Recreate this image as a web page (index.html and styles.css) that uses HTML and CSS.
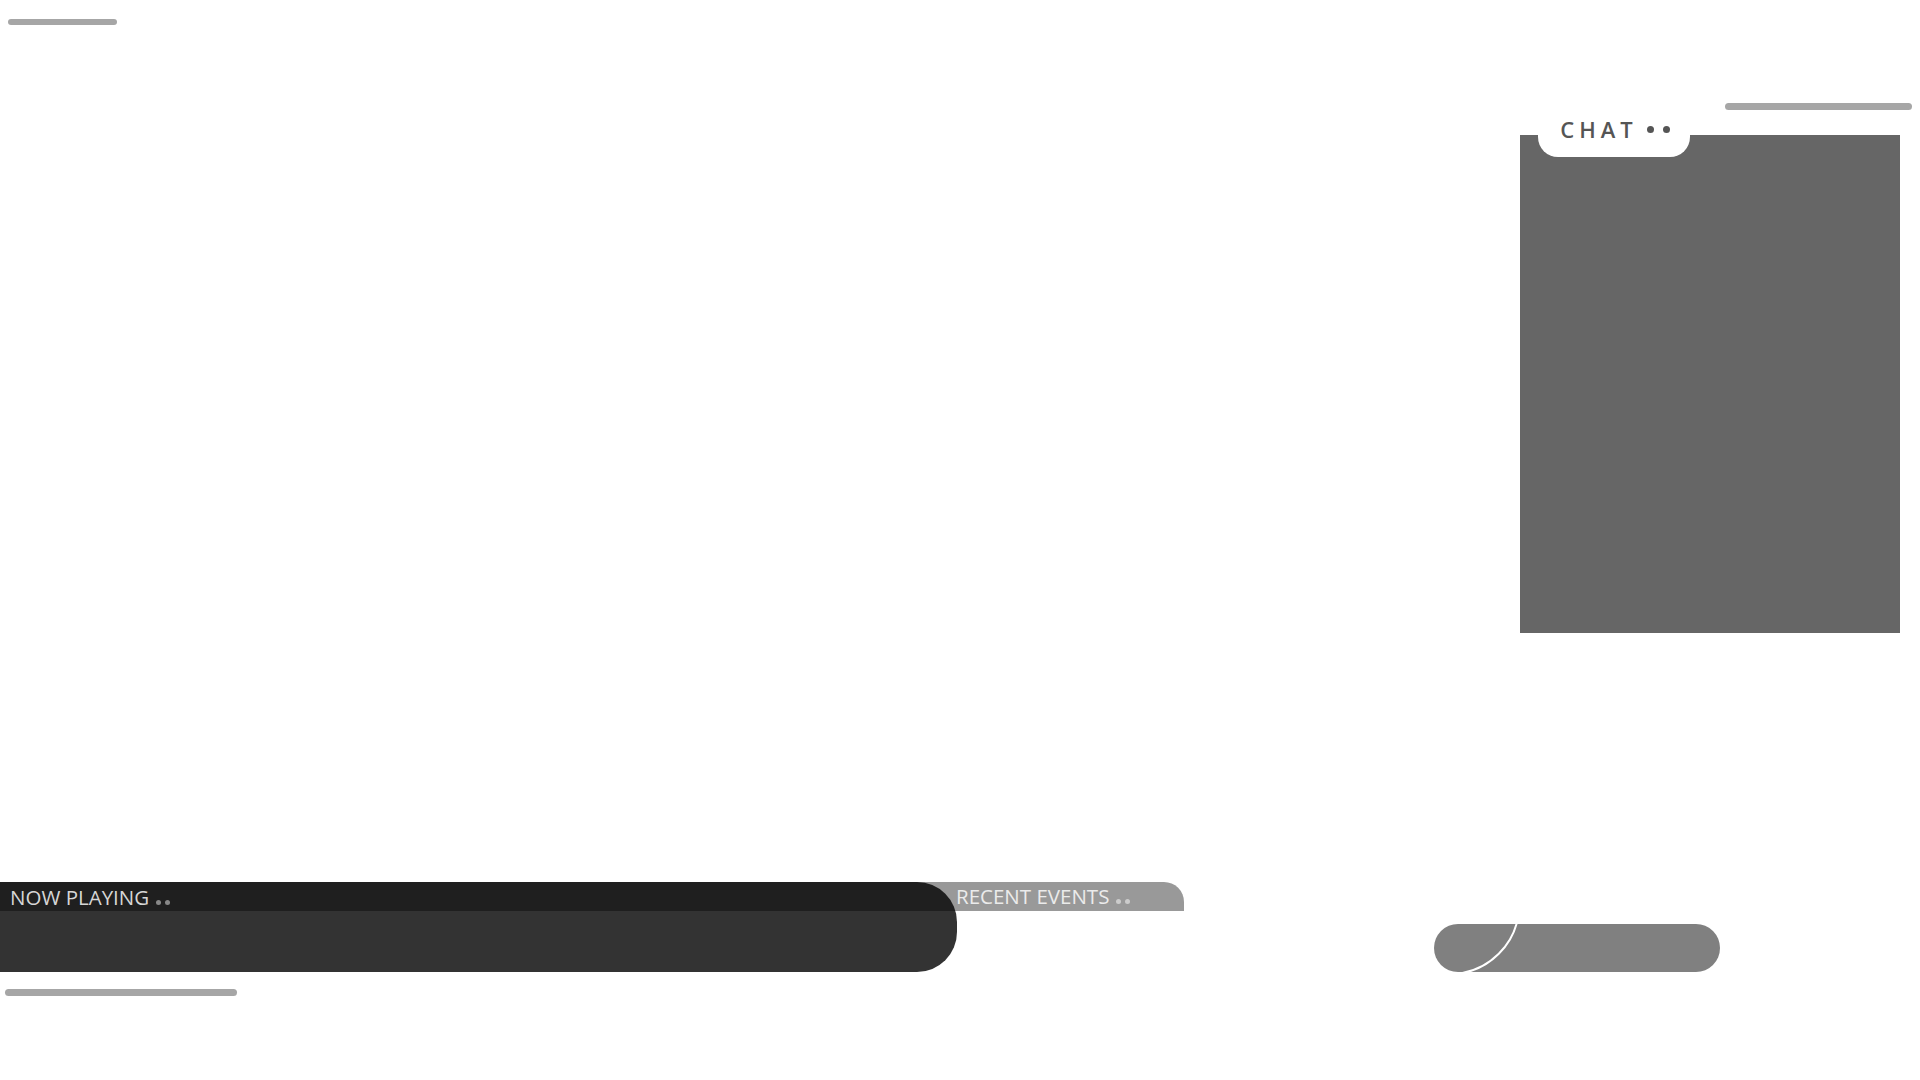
FILE: index.html
```html
<!DOCTYPE html>
<html lang="en">
<head>
  <meta charset="UTF-8"/>
  <meta name="viewport" content="width=device-width, initial-scale=1.0"/>
  <title>Stream Overlay</title>
  <link rel="stylesheet" href="styles.css">
</head>
<body>
<div class="overlay">
  <div class="bar bar-top"></div>

  <section class="chat">
    <div class="bar chat-bar"></div>
    <div class="chat-panel">
      <div class="chat-tab">
        <span class="chat-title">CHAT</span>
        <span class="dot dot-dark"></span>
        <span class="dot dot-dark"></span>
      </div>
    </div>
  </section>

  <footer class="bottom">
    <div class="now">
      <div class="now-head">
        NOW PLAYING<span class="mini-dots"><span class="mini-dot"></span><span class="mini-dot"></span></span>
      </div>
      <div class="now-body"></div>
    </div>
    <div class="recent">
      RECENT EVENTS<span class="mini-dots light"><span class="mini-dot"></span><span class="mini-dot"></span></span>
    </div>
    <div class="pill">
      <svg width="286" height="48" viewBox="0 0 286 48">
        <circle cx="16" cy="-19" r="69" fill="none" stroke="#fff" stroke-width="2"/>
      </svg>
    </div>
  </footer>

  <div class="bar bar-bottom"></div>
</div>
</body>
</html>
```

FILE: styles.css
```css
body {
  margin: 0;
  padding: 0;
  background: #fff;
  font-family: 'Open Sans', 'Noto Sans', sans-serif;
}

.overlay {
  width: 1920px;
  height: 1080px;
  display: flex;
  flex-direction: column;
  overflow: hidden;
  background: #fff;
}

.bar {
  background-color: #a6a6a6;
  border-radius: 4px;
}

.bar-top {
  margin: 19px 0 0 8px;
  width: 109px;
  height: 6px;
  border-radius: 3px;
}

/* chat column */
.chat {
  align-self: flex-end;
  width: 392px;
  margin: 78px 8px 0 0;
}

.chat-bar {
  width: 187px;
  height: 7px;
  margin-left: auto;
}

.chat-panel {
  position: relative;
  margin-top: 25px;
  width: 380px;
  height: 498px;
  background-color: #666;
}

.chat-tab {
  position: absolute;
  top: -25px;
  left: 18px;
  width: 152px;
  height: 47px;
  box-sizing: border-box;
  padding: 4px 0 0 2px;
  background: #fff;
  border-radius: 0 0 20px 20px;
  display: flex;
  justify-content: center;
  align-items: flex-start;
}

.chat-title {
  font-size: 22px;
  font-weight: 600;
  line-height: 30px;
  letter-spacing: 5px;
  color: #555;
}

.dot {
  width: 7px;
  height: 7px;
  border-radius: 50%;
  margin-top: 12px;
}

.dot-dark {
  background: #555;
  margin-left: 9px;
}

.dot-dark:nth-of-type(1) {
  margin-left: 2px;
}

/* bottom ticker */
.bottom {
  display: flex;
  align-items: flex-start;
  margin-top: 249px;
}

.now {
  position: relative;
  z-index: 1;
  width: 957px;
  height: 90px;
  border-radius: 0 40px 40px 0;
  overflow: hidden;
  display: flex;
  flex-direction: column;
}

.now-head {
  height: 29px;
  line-height: 30px;
  padding-left: 10px;
  background-color: #1f1f1f;
  color: #d6d6d6;
  font-size: 20.5px;
  white-space: nowrap;
}

.now-body {
  flex: 1;
  background-color: #333;
}

.recent {
  width: 278px;
  height: 29px;
  line-height: 29px;
  box-sizing: border-box;
  margin-left: -51px;
  padding-left: 50px;
  background-color: #999;
  border-radius: 0 20px 0 0;
  color: #ebebeb;
  font-size: 20.5px;
  white-space: nowrap;
}

.mini-dots {
  display: inline-block;
  margin-left: 7px;
}

.mini-dot {
  display: inline-block;
  width: 5px;
  height: 5px;
  border-radius: 50%;
  background: #888;
  margin-right: 4px;
}

.mini-dots.light .mini-dot {
  background: #ccc;
}

.pill {
  width: 286px;
  height: 48px;
  margin: 42px 0 0 250px;
  border-radius: 24px;
  background-color: #808080;
  overflow: hidden;
}

.pill svg {
  display: block;
}

.bar-bottom {
  margin: 17px 0 0 5px;
  width: 232px;
  height: 7px;
}
```
